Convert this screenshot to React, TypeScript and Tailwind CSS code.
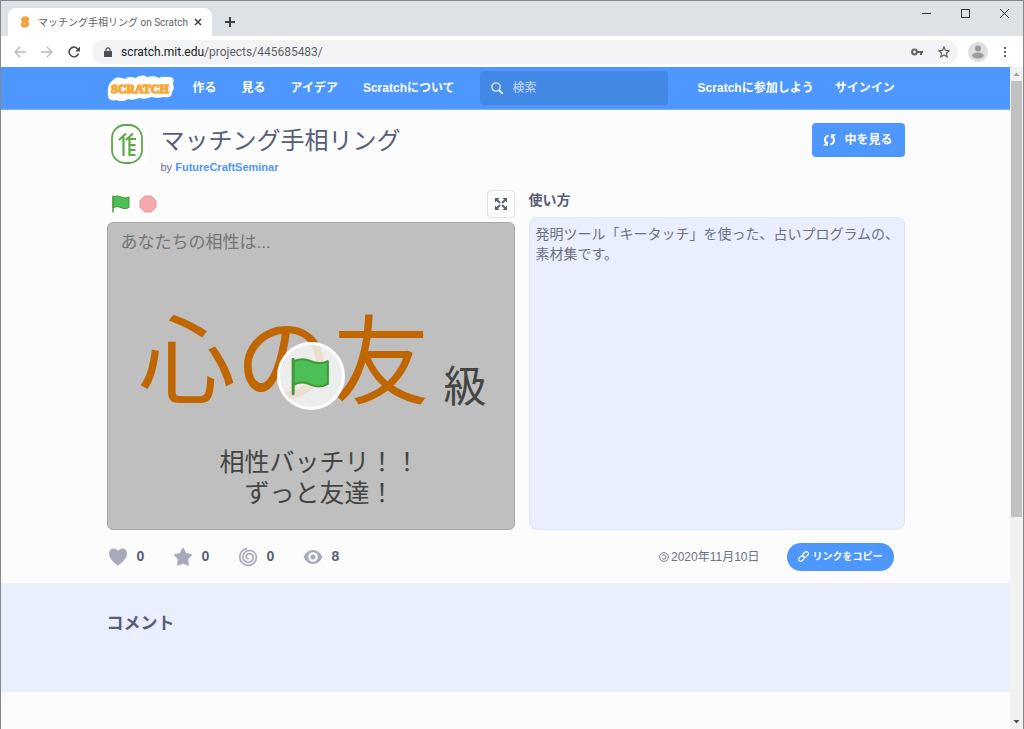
import { useState } from "react";
import type { ReactNode } from "react";

const STATS = [
  { id: "loves", label: "好き", value: 0 },
  { id: "faves", label: "お気に入り", value: 0 },
  { id: "remixes", label: "リミックス", value: 0 },
  { id: "views", label: "閲覧数", value: 8 },
];

const STAT_ICONS: Record<string, ReactNode> = {
  loves: (
    <path
      fill="currentColor"
      d="M10 18.5C7.5 17 1 12 1 6.6 1 3.6 3 1.6 5.6 1.6c1.9 0 3.5 1 4.4 2.7.9-1.7 2.5-2.7 4.4-2.7C17 1.6 19 3.6 19 6.6 19 12 12.5 17 10 18.5z"
    />
  ),
  faves: (
    <path
      fill="currentColor"
      stroke="currentColor"
      strokeWidth="2"
      strokeLinejoin="round"
      d="M10 2l2.5 4.9 5.5 1-3.9 4 .8 5.6L10 15.600l-4.900 1.900.8-5.600L2 7.900l5.500-1z"
    />
  ),
  remixes: (
    <path
      fill="none"
      stroke="currentColor"
      strokeWidth="1.700"
      strokeLinecap="round"
      d="M8.500 1.600C4 2.600 1.600 6.400 1.800 10.600c.3 4.500 4 7.900 8.300 7.800 4.700-.1 8.400-3.900 8.200-8.400-.2-3.900-3.200-6.600-6.900-6.500-3.900.1-6.600 3-6.500 6.600.1 3.200 2.500 5.400 5.400 5.300 2.900-.1 5-2.300 4.900-5-.1-2.200-1.800-3.900-3.900-3.800-2 .1-3.200 1.600-3.100 3.200.1 1.100 1 1.800 2 1.700"
    />
  ),
  views: (
    <path
      fill="currentColor"
      fillRule="evenodd"
      d="M10 3c4.600 0 8 3.500 9.300 7-1.300 3.500-4.700 7-9.300 7S2 13.500.7 10C2 6.500 5.400 3 10 3zm0 2.200a4.800 4.800 0 1 0 0 9.600 4.800 4.800 0 0 0 0-9.600zm0 2.300a2.500 2.500 0 1 1 0 5 2.500 2.500 0 0 1 0-5z"
    />
  ),
};

function GreenFlag({ className }: { className: string }) {
  return (
    <svg viewBox="0 0 18 18" className={className} aria-hidden="true">
      <path
        d="M1 2.200c3-1.800 5.800-1.300 8.200-.2 2.500 1.100 5 1.300 7.800-.1v10.500c-2.800 1.700-5.400 1.500-8 .3C6.600 11.500 4 11.200 1 12.900z"
        fill="#4cbf56"
        stroke="#45993d"
        strokeLinejoin="round"
      />
      <path d="M1 1v16" stroke="#45993d" strokeWidth="1.400" strokeLinecap="round" />
    </svg>
  );
}

function ScratchLogo() {
  return (
    <svg viewBox="0 0 68 26" className="h-[26px] w-[68px]" aria-hidden="true">
      <path
        d="M6 5c4-4 9-2 12-1 3-3 8-2 11-1 4-3 8-3 11-1 5-1 9-1 12 1 3-2 6-1 8-1 5-1 8 2 6 6 1 4 1 7-1 9 0 5-4 6-8 5-5 1-9 1-13 0-4 2-8 2-12 1-4 2-8 2-11 1-4 3-9 2-12 1-6 2-9-2-8-7-1-5 1-10 5-13z"
        fill="#fff"
      />
      <text
        x="4"
        y="18"
        fill="#f9a83a"
        stroke="#f9a83a"
        strokeWidth="1.500"
        strokeLinejoin="round"
        className="font-['Liberation_Serif',serif] text-[12px] font-bold"
      >
        SCRATCH
      </text>
    </svg>
  );
}

function TabStrip() {
  return (
    <div className="flex h-[35px] items-end bg-[#dee1e6] pl-[7px] text-[#3c4043]">
      <div className="flex h-7 w-[204px] items-center rounded-t-lg bg-white pr-[6px] pl-3">
        <svg viewBox="0 0 10 12" className="h-3 w-[10px]" aria-hidden="true">
          <path
            d="M7.500 3.500C7 1.500 3 1.500 2.800 3.800 2.600 6 7.600 5.500 7.400 8.200 7.200 10.500 3 10.500 2.500 8.500"
            fill="none"
            stroke="#f0a23c"
            strokeWidth="3.500"
            strokeLinecap="round"
          />
        </svg>
        <span className="ml-2 flex-1 text-[10px] whitespace-nowrap text-[#5f6368]">
          マッチング手相リング on Scratch
        </span>
        <button type="button" aria-label="タブを閉じる" className="flex h-4 w-4 items-center justify-center">
          <svg viewBox="0 0 8 8" className="h-2 w-2" aria-hidden="true">
            <path d="M1 1l6 6M7 1L1 7" stroke="#3c4043" strokeWidth="1.500" />
          </svg>
        </button>
      </div>
      <button type="button" aria-label="新しいタブ" className="mb-1 ml-2 flex h-5 w-5 items-center justify-center">
        <svg viewBox="0 0 12 12" className="h-3 w-3" aria-hidden="true">
          <path d="M6 1v10M1 6h10" stroke="#3c4043" strokeWidth="2" />
        </svg>
      </button>
      <div className="ml-auto flex gap-[10px] self-start pr-1">
        {[
          { label: "最小化", d: "M1 5.500h9" },
          { label: "最大化", d: "M1.500 1.500h8v8h-8z" },
          { label: "閉じる", d: "M1 1l9 9M10 1l-9 9" },
        ].map((control) => (
          <button
            key={control.label}
            type="button"
            aria-label={control.label}
            className="flex h-[25px] w-[29px] items-center justify-center"
          >
            <svg viewBox="0 0 11 11" className="h-[11px] w-[11px]" aria-hidden="true">
              <path d={control.d} fill="none" stroke="#333" strokeWidth="1" />
            </svg>
          </button>
        ))}
      </div>
    </div>
  );
}

function Toolbar() {
  return (
    <div className="flex h-[31px] items-center bg-white pr-4 pl-[13px] text-[#5f6368]">
      <div className="flex gap-[15px]">
        <button type="button" aria-label="戻る">
          <svg viewBox="0 0 12 12" className="h-3 w-3" aria-hidden="true">
            <path d="M12 6H1.500M6 1L1 6l5 5" fill="none" stroke="#b5b8bb" strokeWidth="1.300" />
          </svg>
        </button>
        <button type="button" aria-label="進む">
          <svg viewBox="0 0 12 12" className="h-3 w-3" aria-hidden="true">
            <path d="M0 6h10.500M6 1l5 5-5 5" fill="none" stroke="#b5b8bb" strokeWidth="1.300" />
          </svg>
        </button>
        <button type="button" aria-label="再読み込み">
          <svg viewBox="0 0 12 12" className="h-3 w-3" aria-hidden="true">
            <path d="M10.500 7.500A4.800 4.800 0 1 1 9.500 2.700L11 4" fill="none" stroke="#4a4d51" strokeWidth="1.600" />
            <path d="M12 .5v5H7z" fill="#4a4d51" />
          </svg>
        </button>
      </div>
      <div className="ml-3 flex h-6 flex-1 items-center rounded-full bg-[#f1f3f4] pr-2 pl-3 text-[12px] leading-4">
        <svg viewBox="0 0 8 10" className="h-[10px] w-2" aria-hidden="true">
          <path d="M0 4h8v6H0z" fill="#4a4d51" />
          <path d="M2 4.500V2.800a2 2 0 0 1 4 0v1.700" fill="none" stroke="#4a4d51" strokeWidth="1.200" />
        </svg>
        <label htmlFor="address" className="ml-[9px] text-[#202124]">
          scratch.mit.edu
        </label>
        <input
          id="address"
          type="text"
          defaultValue="/projects/445685483/"
          className="min-w-0 flex-1 bg-transparent outline-none"
        />
        <button type="button" aria-label="パスワード" className="mr-[15px]">
          <svg viewBox="0 0 12 8" className="h-2 w-3" aria-hidden="true">
            <circle cx="3.500" cy="4" r="2.400" fill="none" stroke="#5f6368" strokeWidth="2" />
            <path d="M6 4h6M10 4v3" stroke="#5f6368" strokeWidth="2" />
          </svg>
        </button>
        <button type="button" aria-label="ブックマーク">
          <svg viewBox="0 0 12 12" className="h-3 w-3" aria-hidden="true">
            <path
              d="M6 1l1.500 3.400 3.700.3-2.800 2.500.8 3.700L6 9l-3.200 1.900.8-3.700L.8 4.700l3.700-.3z"
              fill="none"
              stroke="#5f6368"
              strokeWidth="1.200"
            />
          </svg>
        </button>
      </div>
      <button type="button" aria-label="プロフィール" className="ml-[10px]">
        <svg viewBox="0 0 20 20" className="h-5 w-5" aria-hidden="true">
          <circle cx="10" cy="10" r="10" fill="#dedede" />
          <circle cx="10" cy="6.500" r="3" fill="#9b9b9b" />
          <ellipse cx="10" cy="13.500" rx="5.800" ry="3" fill="#9b9b9b" />
        </svg>
      </button>
      <button type="button" aria-label="メニュー" className="ml-[15px]">
        <svg viewBox="0 0 4 12" className="h-3 w-1" aria-hidden="true">
          <path d="M1 1h2v2H1zM1 5h2v2H1zM1 9h2v2H1z" fill="#5f6368" />
        </svg>
      </button>
    </div>
  );
}

function SiteNav() {
  return (
    <nav className="border-b border-[#7fb1f7] bg-[#4d97ff] text-[12px] font-bold text-white">
      <div className="mx-auto flex h-[42px] max-w-[798px] items-center">
        <a href="#home" aria-label="Scratch" className="mr-[18px]">
          <ScratchLogo />
        </a>
        <div className="flex gap-[25px]">
          <a href="#create">作る</a>
          <a href="#explore">見る</a>
          <a href="#ideas">アイデア</a>
          <a href="#about">Scratchについて</a>
        </div>
        <div className="ml-[25px] flex h-[34px] w-[188px] items-center rounded bg-[#4488e6] pl-[11px]">
          <svg viewBox="0 0 12 12" className="h-3 w-3 shrink-0" aria-hidden="true">
            <circle cx="5" cy="5" r="4.200" fill="none" stroke="#e0edff" strokeWidth="1.300" />
            <path d="M8.200 8.200l3 3" stroke="#e0edff" strokeWidth="2" strokeLinecap="round" />
          </svg>
          <input
            type="text"
            aria-label="検索"
            placeholder="検索"
            className="ml-[10px] h-6 w-full min-w-0 bg-transparent font-normal outline-none placeholder:text-[#c4dbfb]"
          />
        </div>
        <div className="ml-[30px] flex gap-[21px]">
          <a href="#join">Scratchに参加しよう</a>
          <a href="#signin">サインイン</a>
        </div>
      </div>
    </nav>
  );
}

function ProjectHeader() {
  return (
    <div className="flex items-start pt-[13px]">
      <svg viewBox="0 0 40 42" className="h-[42px] w-10" aria-hidden="true">
        <rect width="40" height="42" rx="3" fill="#fff" />
        <g fill="none" stroke="#5aa847">
          <rect x="5" y="2" width="30" height="38" rx="13" strokeWidth="1.800" />
          <path
            d="M12 17l7-6.500M19 17l7-6.500M16.500 14v19M22.500 15v18M21 16h8M23 22h5.500M23 27h5.500M23 32h5.500"
            strokeWidth="2.200"
          />
        </g>
      </svg>
      <div className="ml-[14px] flex-1">
        <h1 className="text-[24px] leading-9 text-[#575e75]">マッチング手相リング</h1>
        <p className="text-[11px] leading-4 text-[#6b7185]">
          by{" "}
          <a href="#author" className="font-bold text-[#4d97ff]">
            FutureCraftSeminar
          </a>
        </p>
      </div>
      <button
        type="button"
        className="flex h-[34px] w-[93px] items-center justify-center gap-2 rounded bg-[#4d97ff] text-[12px] font-bold text-white"
      >
        <svg viewBox="0 0 13 12" className="h-3 w-[13px]" aria-hidden="true">
          <path d="M5.500 1.500C1.800 2.500 1 6 3 9M7.500 10.500C11.200 9.500 12 6 10 3" fill="none" stroke="#fff" strokeWidth="2.200" />
          <path d="M0 11.500l5 .2V7zM13 .5L8 .3V5z" fill="#fff" />
        </svg>
        中を見る
      </button>
    </div>
  );
}

function Stage() {
  const [running, setRunning] = useState(false);

  return (
    <div className="w-[408px] shrink-0">
      <div className="flex h-8 items-start pl-[5px]">
        <button type="button" aria-label="開始" onClick={() => setRunning(true)} className="mt-[5px]">
          <GreenFlag className="h-[18px] w-[18px]" />
        </button>
        <button type="button" aria-label="停止" onClick={() => setRunning(false)} className="mt-[5px] ml-[9px]">
          <svg viewBox="0 0 18 18" className="h-[18px] w-[18px]" aria-hidden="true">
            <path
              d="M5.700 1h6.600L17 5.700v6.600L12.300 17H5.700L1 12.300V5.700z"
              fill="#f4a9ab"
              stroke="#e39a9f"
              strokeLinejoin="round"
            />
          </svg>
        </button>
        <button
          type="button"
          aria-label="全画面"
          className="ml-auto flex h-7 w-7 items-center justify-center rounded border border-[#dfe3ea] bg-white"
        >
          <svg viewBox="0 0 14 14" className="h-[14px] w-[14px]" aria-hidden="true">
            <path
              d="M1 1h4.500L1 5.500zM13 1v4.500L8.500 1zM1 13V8.500L5.500 13zM13 13H8.500L13 8.500z"
              fill="#575e75"
            />
            <path d="M2 2l4 4M12 2L8 6M2 12l4-4M12 12L8 8" stroke="#575e75" strokeWidth="1.800" />
          </svg>
        </button>
      </div>
      <div className="relative h-[308px] rounded-md border border-[#a9a9a9] bg-[#bfbfbf] text-[#454545]">
        <p className="pt-2 pl-[13px] text-[17px] leading-6 text-[#757575]">あなたちの相性は...</p>
        <p className="flex items-end pt-[56px] pl-[31px]">
          <span className="text-[97px] leading-[104px] text-[#bf6600]">心の友</span>
          <span className="ml-[14px] text-[43px] leading-[56px]">級</span>
        </p>
        <p className="pt-[32px] pl-[18px] text-center text-[25px] leading-[31px]">
          相性バッチリ！！
          <br />
          ずっと友達！
        </p>
        {!running && (
          <button
            type="button"
            aria-label="プロジェクトを開始"
            onClick={() => setRunning(true)}
            className="absolute inset-0 m-auto flex h-[68px] w-[68px] items-center justify-center rounded-full border-3 border-white bg-[#f4f4f4]/85"
          >
            <GreenFlag className="h-[39px] w-[39px]" />
          </button>
        )}
      </div>
    </div>
  );
}

function StatsRow() {
  return (
    <div className="flex h-[53px] items-center">
      <ul className="flex">
        {STATS.map((stat) => (
          <li key={stat.id} className="w-[65px]">
            <button
              type="button"
              aria-label={`${stat.label} ${stat.value}`}
              className="flex items-center gap-[9px] pl-px text-[14px] font-bold text-[#575e75]"
            >
              <svg viewBox="0 0 20 20" className="h-5 w-5 text-[#a9aab9]" aria-hidden="true">
                {STAT_ICONS[stat.id]}
              </svg>
              {stat.value}
            </button>
          </li>
        ))}
      </ul>
      <p className="ml-auto flex items-center gap-[2px] text-[12px] text-[#6b7185]">
        <svg viewBox="0 0 10 10" className="h-[10px] w-[10px]" aria-hidden="true">
          <circle cx="5" cy="5" r="4.400" fill="none" stroke="#6b7185" strokeWidth=".9" />
          <path d="M3.300 3.600a2.100 2.100 0 1 1 0 2.800" fill="none" stroke="#6b7185" />
        </svg>
        2020年11月10日
      </p>
      <button
        type="button"
        className="mr-[11px] ml-[27px] flex h-7 w-[107px] items-center justify-center gap-1 rounded-full bg-[#4d97ff] text-[10px] font-bold text-white"
      >
        <svg viewBox="0 0 11 11" className="h-[11px] w-[11px]" aria-hidden="true">
          <g fill="none" stroke="#fff" strokeWidth="1.200" transform="rotate(-45 5.500 5.500)">
            <rect x="-.5" y="3.500" width="6.500" height="4" rx="2" />
            <rect x="5" y="3.500" width="6.500" height="4" rx="2" />
          </g>
        </svg>
        リンクをコピー
      </button>
    </div>
  );
}

function Scrollbar() {
  return (
    <div className="flex w-[13px] flex-col items-center bg-[#f1f1f1]" aria-hidden="true">
      <svg viewBox="0 0 13 14" className="h-[14px] w-[13px]">
        <path d="M3.500 9h6l-3-3.500z" fill="#a3a3a3" />
      </svg>
      <div className="h-[436px] w-[11px] bg-[#c1c1c1]" />
      <svg viewBox="0 0 13 14" className="mt-auto h-[14px] w-[13px]">
        <path d="M3.500 5h6l-3 3.500z" fill="#505050" />
      </svg>
    </div>
  );
}

export default function App() {
  return (
    <div className="flex min-h-screen flex-col border border-b-0 border-[#85878a] bg-[#fcfcfc] font-['Liberation_Sans','Noto_Sans_CJK_JP',sans-serif]">
      <header className="font-['Roboto','Noto_Sans_CJK_JP',sans-serif]">
        <TabStrip />
        <Toolbar />
      </header>
      <div className="flex flex-1">
        <div className="min-w-0 flex-1">
          <SiteNav />
          <main>
            <div className="mx-auto max-w-[798px]">
              <ProjectHeader />
              <div className="flex gap-[14px] pt-[15px]">
                <Stage />
                <section className="flex flex-1 flex-col">
                  <h2 className="h-[27px] text-[14px] leading-5 font-bold text-[#575e75]">使い方</h2>
                  <p className="flex-1 rounded-lg border border-[#dbe6f8] bg-[#e9effc] pt-[6px] pl-[6px] text-[14px] leading-5 text-[#6b7185]">
                    発明ツール「キータッチ」を使った、占いプログラムの、素材集です。
                  </p>
                </section>
              </div>
              <StatsRow />
            </div>
            <section className="h-[109px] bg-[#e9effc]">
              <h2 className="mx-auto max-w-[798px] pt-[28px] text-[17px] leading-[26px] font-bold text-[#575e75]">
                コメント
              </h2>
            </section>
          </main>
        </div>
        <Scrollbar />
      </div>
    </div>
  );
}
